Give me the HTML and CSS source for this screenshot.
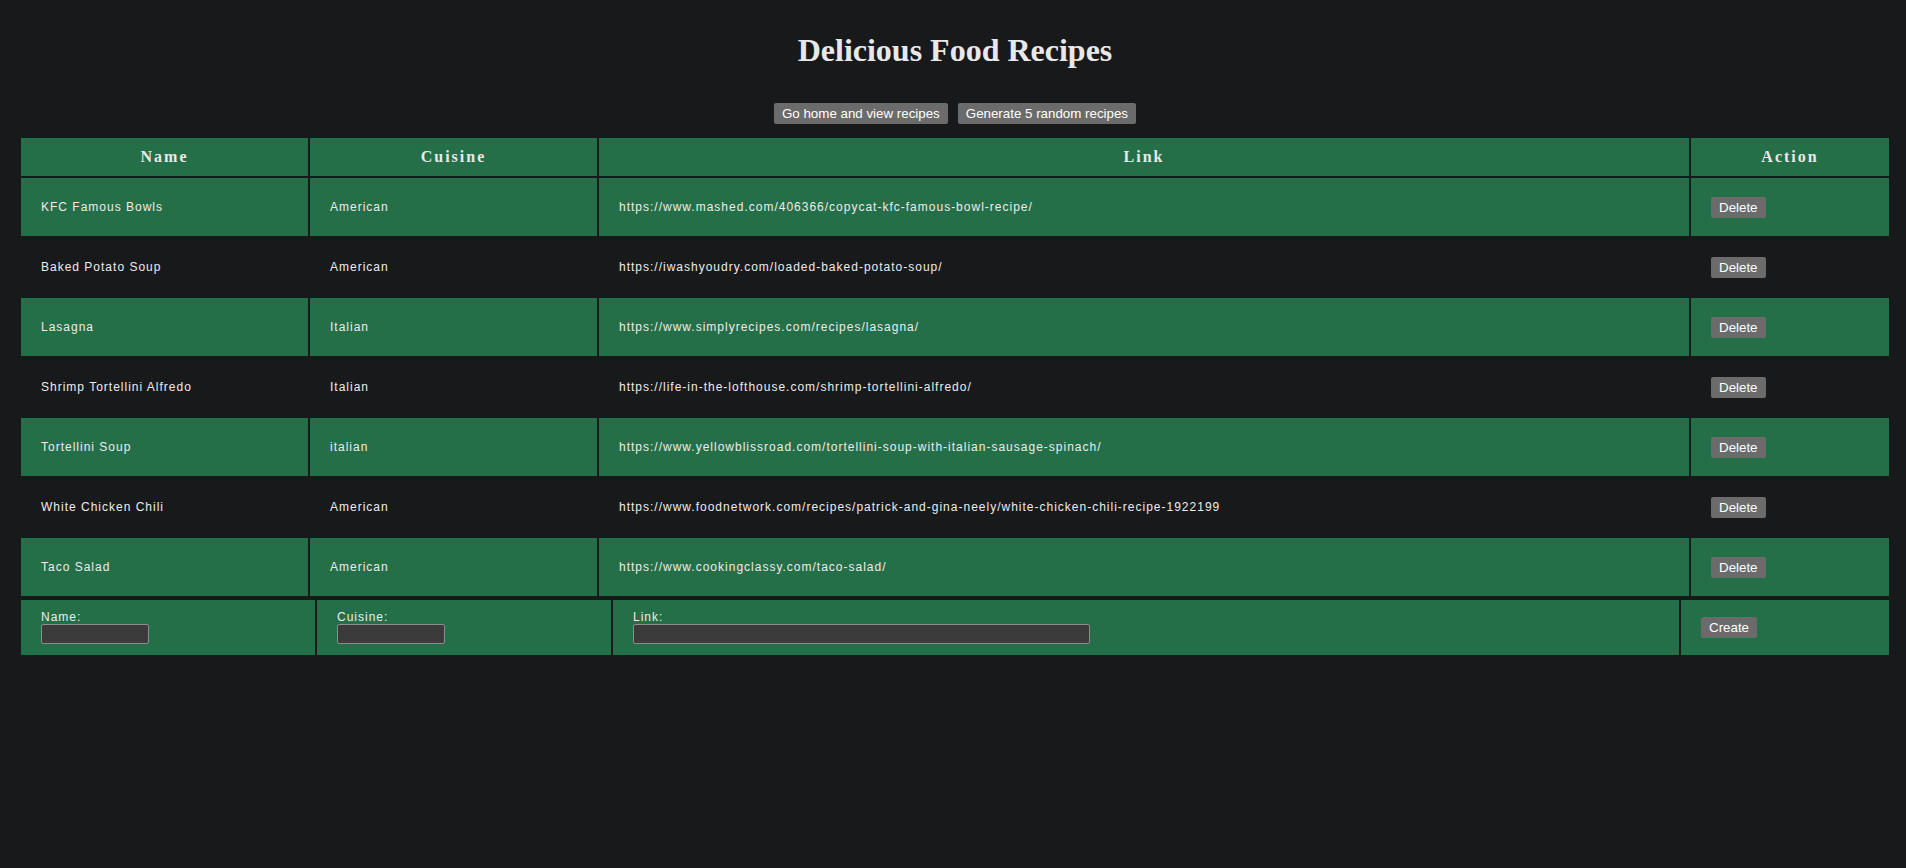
FILE: index.html
```html
<!DOCTYPE html>
<html lang="en">
<head>
<meta charset="utf-8">
<title>Delicious Food Recipes</title>
<link rel="stylesheet" href="styles.css">
</head>
<body>
<div class="page">
  <h1 class="title">Delicious Food Recipes</h1>
  <div class="toolbar">
    <button class="btn">Go home and view recipes</button>
    <button class="btn">Generate 5 random recipes</button>
  </div>
  <table class="recipes">
    <colgroup>
      <col class="c-name"><col class="c-cuisine"><col class="c-link"><col class="c-action">
    </colgroup>
    <thead>
      <tr class="head"><th>Name</th><th>Cuisine</th><th>Link</th><th>Action</th></tr>
    </thead>
    <tbody>
      <tr class="row odd"><td>KFC Famous Bowls</td><td>American</td><td>https://www.mashed.com/406366/copycat-kfc-famous-bowl-recipe/</td><td><button class="btn">Delete</button></td></tr>
      <tr class="row"><td>Baked Potato Soup</td><td>American</td><td>https://iwashyoudry.com/loaded-baked-potato-soup/</td><td><button class="btn">Delete</button></td></tr>
      <tr class="row odd"><td>Lasagna</td><td>Italian</td><td>https://www.simplyrecipes.com/recipes/lasagna/</td><td><button class="btn">Delete</button></td></tr>
      <tr class="row"><td>Shrimp Tortellini Alfredo</td><td>Italian</td><td>https://life-in-the-lofthouse.com/shrimp-tortellini-alfredo/</td><td><button class="btn">Delete</button></td></tr>
      <tr class="row odd"><td>Tortellini Soup</td><td>italian</td><td>https://www.yellowblissroad.com/tortellini-soup-with-italian-sausage-spinach/</td><td><button class="btn">Delete</button></td></tr>
      <tr class="row"><td>White Chicken Chili</td><td>American</td><td>https://www.foodnetwork.com/recipes/patrick-and-gina-neely/white-chicken-chili-recipe-1922199</td><td><button class="btn">Delete</button></td></tr>
      <tr class="row odd"><td>Taco Salad</td><td>American</td><td>https://www.cookingclassy.com/taco-salad/</td><td><button class="btn">Delete</button></td></tr>
    </tbody>
  </table>
  <table class="create">
    <colgroup>
      <col class="f-name"><col class="f-cuisine"><col class="f-link"><col class="f-action">
    </colgroup>
    <tr class="form-row">
      <td><label class="lbl">Name:</label><input class="inp inp-short" type="text"></td>
      <td><label class="lbl">Cuisine:</label><input class="inp inp-short" type="text"></td>
      <td><label class="lbl">Link:</label><input class="inp inp-long" type="text"></td>
      <td><button class="btn">Create</button></td>
    </tr>
  </table>
</div>
</body>
</html>
```

FILE: styles.css
```css
html, body {
  margin: 0;
  padding: 0;
  background: #18191b;
}
body {
  width: 1906px;
  height: 868px;
  overflow: hidden;
  font-family: "Liberation Sans", Arial, sans-serif;
  color: #ececec;
}
.page {
  padding-left: 19px;
  width: 1872px;
}
.title {
  margin: 32px 0 0;
  font-family: "Liberation Serif", "Times New Roman", serif;
  font-size: 32px;
  font-weight: bold;
  line-height: normal;
  text-align: center;
  color: #e8e8e8;
}
.toolbar {
  margin-top: 34px;
  display: flex;
  justify-content: center;
  gap: 10px;
}
.btn {
  font-family: "Liberation Sans", Arial, sans-serif;
  font-size: 13.333px;
  line-height: normal;
  padding: 3px 8px;
  border: none;
  border-radius: 2px;
  background: #6b6b6b;
  color: #ffffff;
  cursor: pointer;
}
.recipes, .create {
  width: 1872px;
  table-layout: fixed;
  border-collapse: separate;
  border-spacing: 2px;
}
.recipes {
  margin-top: 12px;
}
.c-name { width: 287px; }
.c-cuisine { width: 287px; }
.c-link { width: 1090px; }
.c-action { width: 198px; }
.f-name { width: 294px; }
.f-cuisine { width: 294px; }
.f-link { width: 1066px; }
.f-action { width: 208px; }
.head {
  height: 38px;
}
.head th {
  background: #256f48;
  padding: 0;
  font-family: "Liberation Serif", "Times New Roman", serif;
  font-size: 16px;
  font-weight: bold;
  letter-spacing: 2px;
  color: #e8e8e8;
  text-align: center;
  vertical-align: middle;
}
.row {
  height: 58px;
}
.row td {
  padding: 0 20px;
  font-size: 12px;
  letter-spacing: 1px;
  color: #ececec;
  vertical-align: middle;
  white-space: nowrap;
  overflow: hidden;
}
.row.odd td {
  background: #256f48;
}
.row .btn {
  letter-spacing: 0;
}
.form-row {
  height: 55px;
}
.form-row td {
  background: #256f48;
  padding: 0 20px 1px;
  vertical-align: middle;
}
.lbl {
  display: block;
  font-size: 12px;
  letter-spacing: 1px;
  line-height: 14px;
  color: #ececec;
}
.inp {
  display: block;
  box-sizing: border-box;
  height: 20px;
  margin: 0;
  padding: 0 3px;
  background: #3b3b3b;
  border: 1px solid #8c8c8c;
  border-radius: 2px;
  color: #e4e4e4;
}
.inp-short { width: 108px; }
.inp-long { width: 457px; }
```
